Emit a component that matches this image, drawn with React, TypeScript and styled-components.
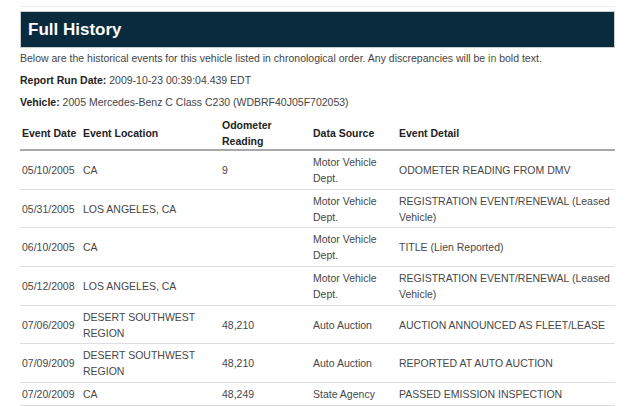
import React from "react";
import styled, { createGlobalStyle } from "styled-components";

const Global = createGlobalStyle`
  html, body { margin: 0; padding: 0; background: #ffffff; }
  body { font-family: "Liberation Sans", Arial, sans-serif; color: #444; }
`;

const Page = styled.div`
  width: 640px;
  height: 406px;
  overflow: hidden;
  padding: 0 25px 0 20px;
  box-sizing: border-box;
`;

const TopRule = styled.div`
  margin-top: 6px;
  height: 1px;
  background: #ebebeb;
`;

const TitleBar = styled.div`
  margin-top: 4px;
  height: 37px;
  background: #0a2a3d;
  border: 1px solid #c9ced3;
  box-sizing: border-box;
  display: flex;
  align-items: center;
  padding-left: 7px;
`;

const Title = styled.h2`
  margin: 0;
  color: #ffffff;
  font-family: "Liberation Sans", Arial, sans-serif;
  font-size: 17px;
  font-weight: bold;
`;

const Para = styled.p`
  margin: 0;
  font-size: 10.5px;
  line-height: 22px;
  color: #444;
`;

const Intro = styled(Para)`
  margin-top: -1px;
`;

const Label = styled.b`
  color: #222;
`;

const Greenish = styled.span`
  color: #3f6b3f;
`;

const Table = styled.table`
  width: 595px;
  border-collapse: collapse;
  table-layout: fixed;
  margin-top: 2px;
  font-size: 10.5px;
  line-height: 16px;
`;

const Th = styled.th<{ $w: number }>`
  box-sizing: border-box;
  width: ${(p) => p.$w}px;
  text-align: left;
  vertical-align: middle;
  color: #222;
  font-weight: bold;
  line-height: 15.5px;
  padding: 3px 2px 0 2px;
  border-bottom: 2px solid #a8a8a8;
`;

const Td = styled.td`
  vertical-align: middle;
  padding: 3px 2px 2.7px 2px;
  color: #474747;
  border-bottom: 1px solid #dedede;
`;

const rows: [string, string, string, string, string][] = [
  ["05/10/2005", "CA", "9", "Motor Vehicle Dept.", "ODOMETER READING FROM DMV"],
  ["05/31/2005", "LOS ANGELES, CA", "", "Motor Vehicle Dept.", "REGISTRATION EVENT/RENEWAL (Leased Vehicle)"],
  ["06/10/2005", "CA", "", "Motor Vehicle Dept.", "TITLE (Lien Reported)"],
  ["05/12/2008", "LOS ANGELES, CA", "", "Motor Vehicle Dept.", "REGISTRATION EVENT/RENEWAL (Leased Vehicle)"],
  ["07/06/2009", "DESERT SOUTHWEST REGION", "48,210", "Auto Auction", "AUCTION ANNOUNCED AS FLEET/LEASE"],
  ["07/09/2009", "DESERT SOUTHWEST REGION", "48,210", "Auto Auction", "REPORTED AT AUTO AUCTION"],
  ["07/20/2009", "CA", "48,249", "State Agency", "PASSED EMISSION INSPECTION"],
];

export default function App() {
  return (
    <>
      <Global />
      <Page>
        <TopRule />
        <TitleBar>
          <Title>Full History</Title>
        </TitleBar>
        <Intro>
          Below are the historical events for this vehicle listed in chronological order. Any discrepancies will be{" "}
          <Greenish>in</Greenish> bold text.
        </Intro>
        <Para>
          <Label>Report Run Date:</Label> 2009-10-23 00:39:04.439 EDT
        </Para>
        <Para>
          <Label>Vehicle:</Label> 2005 Mercedes-Benz C Class C230 (WDBRF40J05F702053)
        </Para>
        <Table>
          <thead>
            <tr>
              <Th $w={61}>Event Date</Th>
              <Th $w={139}>Event Location</Th>
              <Th $w={91}>Odometer Reading</Th>
              <Th $w={86}>Data Source</Th>
              <Th $w={218}>Event Detail</Th>
            </tr>
          </thead>
          <tbody>
            {rows.map((r, i) => (
              <tr key={i}>
                {r.map((c, j) => (
                  <Td key={j}>{c}</Td>
                ))}
              </tr>
            ))}
          </tbody>
        </Table>
      </Page>
    </>
  );
}
